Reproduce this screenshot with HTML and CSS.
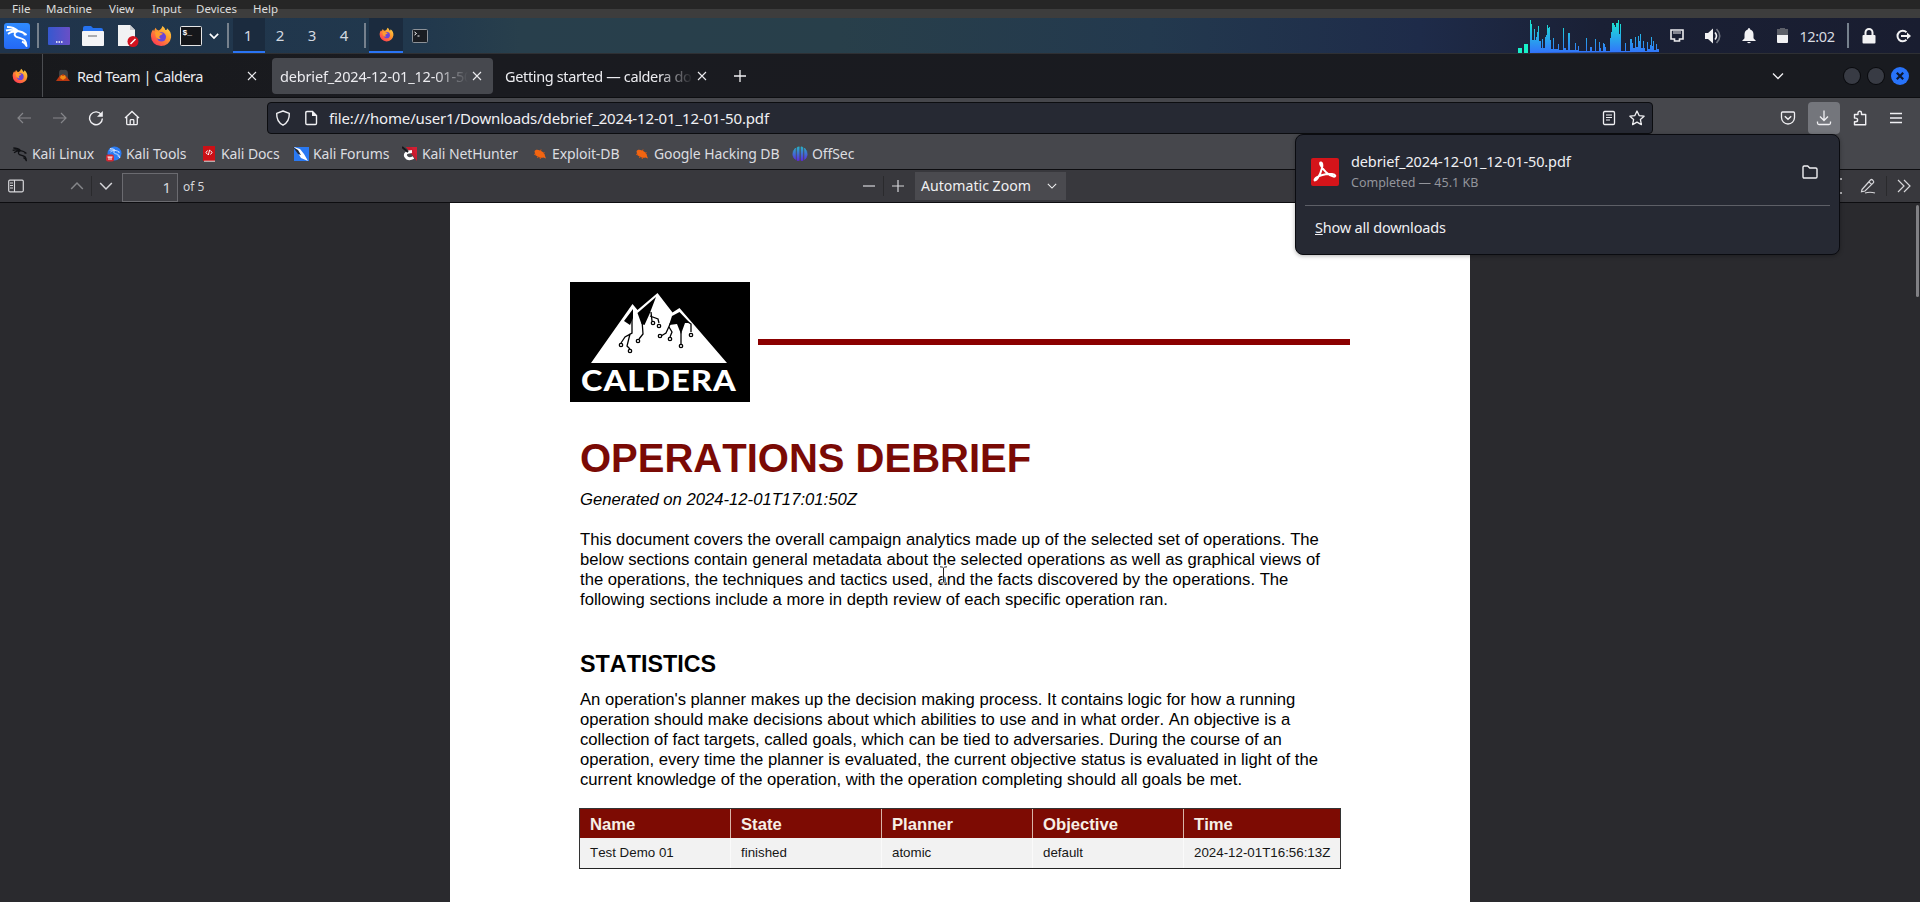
FILE: index.html
```html
<!DOCTYPE html>
<html lang="en">
<head>
<meta charset="utf-8">
<title>debrief_2024-12-01_12-01-50.pdf</title>
<link rel="stylesheet" href="styles.css">
</head>
<body>
<svg width="0" height="0" class="defs">
  <defs>
    <linearGradient id="ffg" x1="1" y1="0" x2="0.2" y2="1"><stop offset="0" stop-color="#ffe14a"/><stop offset=".45" stop-color="#ff9a2e"/><stop offset="1" stop-color="#ff3355"/></linearGradient>
    <linearGradient id="kg" x1="0" y1="0" x2="0" y2="1"><stop offset="0" stop-color="#2f8bff"/><stop offset="1" stop-color="#2468f5"/></linearGradient>
    <linearGradient id="dg" x1="0" y1="0" x2="1" y2="0"><stop offset="0" stop-color="#3558cf"/><stop offset="1" stop-color="#6a4fc6"/></linearGradient>
    <linearGradient id="gg" gradientUnits="userSpaceOnUse" x1="0" y1="0" x2="0" y2="34"><stop offset="0" stop-color="#18f0c8"/><stop offset=".5" stop-color="#26b0e8"/><stop offset="1" stop-color="#3272fb"/></linearGradient>
    <linearGradient id="og" x1="0" y1="0" x2="0" y2="1"><stop offset="0" stop-color="#27b3c8"/><stop offset="1" stop-color="#5a2be0"/></linearGradient>
    <symbol id="firefox" viewBox="0 0 24 24">
      <path d="M13.500 1c2 1.200 3 3 3.200 4.500 1 .3 2-.5 1.800-2 3.500 2.500 5 6 4.500 10A11 11 0 0 1 12 23 11 11 0 0 1 1 12c0-3 1-5.500 2.500-7 .2 1 .6 1.500 1 1.800C5 5 5.500 3.500 6.500 3c0 1.500 1 2.500 3 3 2-1 3.500-2.500 4-5z" fill="url(#ffg)"/>
      <circle cx="12.500" cy="13" r="5" fill="#6a45d8"/>
      <path d="M5.500 8c2-.9 4.500-.6 6 .6l2.500.8c-.4 1.400-2.500 1.500-3.500 2.500-.7 1-.2 2.600 1.300 3-2.800 1-5.300-.5-5.800-3.500z" fill="#ff9d2d"/>
    </symbol>
    <symbol id="dragon" viewBox="0 0 24 24">
      <path d="M2 3c4 0 8 1 11 4M1 6.500C5 5 9 6 13 7M3 10c3-2.500 6-3 10-3 M13 7c3 .5 5.500 1.500 8 3.500l-2.500-.2 M13 7c-3 1-4.500 3-2.500 5.200 2.500 2 6.500 1.500 9 4 1.500 1.600 2 3.500 2 5.800-1-2.500-2.500-3.800-4.500-4.500" fill="none" stroke="currentColor" stroke-width="1.900" stroke-linejoin="round"/>
    </symbol>
    <symbol id="chev" viewBox="0 0 12 12"><path d="M1 3.500l5 5 5-5" fill="none" stroke="currentColor" stroke-width="1.300"/></symbol>
    <symbol id="x" viewBox="0 0 10 10"><path d="M1 1l8 8M9 1L1 9" stroke="currentColor" stroke-width="1.100"/></symbol>
    <symbol id="bug" viewBox="0 0 16 16"><path d="M2.500 5.500C3 3.500 5.500 3.500 8 4.500c3 1 5 3 5 5.500l1 2.500-2.500-1C8 12.500 5 10.500 3.500 9z" fill="#f26511"/><path d="M2 8l2 1M5 11.500l2-1M8 13l1-2M9 3.500L8.500 5M12.500 6.500L11 7.500" stroke="#e3570c"/></symbol>
  </defs>
</svg>

<nav class="menubar"><span>File</span><span>Machine</span><span>View</span><span>Input</span><span>Devices</span><span>Help</span></nav>

<header class="panel">
  <div class="panel-left">
    <div class="cell logo"><svg width="26" height="26" viewBox="0 0 26 26"><rect width="26" height="26" rx="3" fill="url(#kg)"/><use href="#dragon" x="1" y="1" width="24" height="24" color="#fff"/></svg></div>
    <i class="sep"></i>
    <div class="cell"><svg width="22" height="18" viewBox="0 0 22 18"><rect width="22" height="18" rx="1" fill="url(#dg)"/><path d="M8 15h1.500M10.500 15H12M13 15h1.500" stroke="#fff" stroke-width="1.500"/></svg></div>
    <div class="cell"><svg width="22" height="20" viewBox="0 0 22 20"><path d="M1 2q0-2 2-2h6l2 2h8q2 0 2 2v4H1z" fill="#2572f0"/><rect y="5" width="22" height="15" rx="1" fill="#f4f4f6"/><path d="M6 10h9" stroke="#a9abb0" stroke-width="2"/></svg></div>
    <div class="cell"><svg width="22" height="22" viewBox="0 0 22 22"><path d="M1 0h12l5 5v16H1z" fill="#f1f2f3"/><path d="M13 0v5h5z" fill="#c9ccd0"/><circle cx="16" cy="16.500" r="5.500" fill="#d3121f"/><path d="M13.500 19l5-5" stroke="#fff" stroke-width="1.500"/></svg></div>
    <div class="cell"><svg width="22" height="22"><use href="#firefox" width="22" height="22"/></svg></div>
    <div class="cell"><svg width="22" height="20" viewBox="0 0 22 20"><rect x=".5" y=".5" width="21" height="19" rx="1" fill="#15161a" stroke="#e6e6e6"/><text x="2.500" y="9" class="term">$_</text></svg></div>
    <div class="cell launcher-more"><svg width="10" height="10" viewBox="0 0 12 12"><path d="M1 3.500l5 5 5-5" fill="none" stroke="#fff" stroke-width="2"/></svg></div>
    <i class="sep"></i>
    <div class="ws active">1</div><div class="ws">2</div><div class="ws">3</div><div class="ws">4</div>
    <i class="sep"></i>
    <div class="cell task"><svg width="15" height="15"><use href="#firefox" width="15" height="15"/></svg></div>
    <div class="cell"><svg width="16" height="14" viewBox="0 0 16 14"><rect x=".5" y=".5" width="15" height="13" rx="1" fill="#1a1d22" stroke="#8d9298"/><path d="M2.500 3l2 1.500-2 1.500M5.500 7h2" stroke="#fff" fill="none"/></svg></div>
  </div>
  <div class="panel-right">
    <svg class="graph" width="141" height="34" viewBox="0 0 141 34">
      <path fill="#18f0c8" d="M0 29h4v5H0zM6 25h4v9H6z"/>
      <path fill="url(#gg)" d="M12 34V1h1v4h1v16h2V10h1v11h1v-3h1v-5h1V7h1v15h2v7h1V20h1v9h2V18h1v-2h1V6h1v3h1V8h1v13h1v9h2V19h1v11h4v-5h1v6h4V9h1v20h2v2h2V14h2v17h5v-7h1v7h2v-4h1v5h7V19h1v13h3v-12h-1h1v8h2v4h3V20h1v12h3v-9h1v6h1v3h2v-8h1v1h1v3h1v4h4v-13h1v-6h1V4h2V6h1v2h1V4h2V1h1v14h1V5h1v27h4v-8h1v8h4V20h2v4h1v5h2V18h1v10h2V17h1v5h1v-7h1v14h2v-7h1v7h1v3h2v-9h1v7h2v-4h1v-8h1v9h1v-5h1v9h2v-6h1v5h2v-3h1v4h3v-5h3v7z"/>
    </svg>
    <div class="cell"><svg width="14" height="13" viewBox="0 0 14 13"><path d="M1 1h12v9H9.500v2h-5v-2H1z" fill="none" stroke="#ececee" stroke-width="1.600"/><path d="M4 2v3M6 2v3M8 2v3M10 2v3" stroke="#ececee"/></svg></div>
    <div class="cell"><svg width="18" height="18" viewBox="0 0 18 18"><path d="M1 6h3l5-4.500v15L4 12H1z" fill="#f2f2f4"/><path d="M11 5.500q3 3.500 0 7" fill="none" stroke="#f2f2f4" stroke-width="1.600"/><path d="M12.500 2q6.500 7 0 14" fill="none" stroke="#6f7480" stroke-width="1.600"/></svg></div>
    <div class="cell"><svg width="14" height="16" viewBox="0 0 14 16"><path d="M7 0q1.200 0 1.200 1.500Q11.500 2.500 11.500 6.500v3.800L14 13H0l2.500-2.700V6.500q0-4 3.300-5Q5.800 0 7 0zM5 14h4q-2 2.500-4 0z" fill="#f2f2f4"/></svg></div>
    <div class="cell"><svg width="11" height="15" viewBox="0 0 11 15"><path d="M3 0h5v1h3v6H0V1h3z" fill="#5d6069"/><path d="M0 7h11v7q0 1-1 1H1q-1 0-1-1z" fill="#f2f2f4"/></svg></div>
    <div class="clock">12:02</div>
    <i class="sep"></i>
    <div class="cell"><svg width="14" height="16" viewBox="0 0 14 16"><path d="M3.500 8V4.500a3.500 3.500 0 0 1 7 0V8" fill="none" stroke="#f2f2f4" stroke-width="2"/><rect x="0.500" y="7" width="13" height="8.500" rx="1" fill="#f2f2f4"/></svg></div>
    <div class="cell"><svg width="15" height="14" viewBox="0 0 15 14"><path d="M10.500 3.200A5.300 5.300 0 1 0 10.500 10.800M5 7h8" fill="none" stroke="#f2f2f4" stroke-width="2"/><path d="M11 3.500L15 7l-4 3.500z" fill="#f2f2f4"/></svg></div>
  </div>
</header>

<div class="tabs">
  <div class="tab-home"><svg width="16" height="16"><use href="#firefox" width="16" height="16"/></svg></div>
  <div class="tab t1">
    <svg class="fav" width="14" height="14" viewBox="0 0 14 14"><path d="M3 4q0-4 4-3 5-1 5 4v5H3z" fill="#3f4244"/><path d="M0 12l3.500-5 3.500-2 3 2 4 5z" fill="#b93812"/><path d="M5 6l2 1 2-1 1 3-3 2-3-2z" fill="#f18a14"/></svg>
    <span>Red Team | Caldera</span><svg class="close" width="10" height="10"><use href="#x" width="10" height="10"/></svg>
  </div>
  <div class="tab t2 active"><span class="fade">debrief_2024-12-01_12-01-50.pdf</span><svg class="close" width="10" height="10"><use href="#x" width="10" height="10"/></svg></div>
  <div class="tab t3"><span class="fade">Getting started — caldera do</span><svg class="close" width="10" height="10"><use href="#x" width="10" height="10"/></svg></div>
  <svg class="plus" width="14" height="14" viewBox="0 0 14 14"><path d="M7 1v12M1 7h12" stroke="#f0f0f2" stroke-width="1.300"/></svg>
  <div class="wm">
    <svg width="12" height="12" class="tabs-menu"><use href="#chev" width="12" height="12"/></svg>
    <i></i><i></i><svg class="wm-close" width="18" height="18" viewBox="0 0 18 18"><circle cx="9" cy="9" r="9" fill="#2873fa"/><path d="M5.800 5.800l6.400 6.400M12.200 5.800l-6.400 6.400" stroke="#0d1830" stroke-width="2.200"/></svg>
  </div>
</div>

<div class="nav">
  <div class="nav-buttons">
    <svg class="dim" width="16" height="16" viewBox="0 0 16 16"><path d="M15 8H2M7 3L2 8l5 5" fill="none" stroke="currentColor" stroke-width="1.200"/></svg>
    <svg class="dim" width="16" height="16" viewBox="0 0 16 16"><path d="M1 8h13M9 3l5 5-5 5" fill="none" stroke="currentColor" stroke-width="1.200"/></svg>
    <svg width="16" height="16" viewBox="0 0 16 16"><path d="M13.500 5A6.400 6.400 0 1 0 14.400 8.500" fill="none" stroke="currentColor" stroke-width="1.400"/><path d="M14.800 1v5.800H9z" fill="currentColor"/></svg>
    <svg width="16" height="16" viewBox="0 0 16 16"><path d="M1 8l7-6.500L15 8M2.700 7v6.500q0 1.200 1.200 1.200h8.200q1.200 0 1.200-1.200V7M6.200 14.500v-4q0-.8.800-.8h2q.8 0 .8.800v4" fill="none" stroke="currentColor" stroke-width="1.300"/></svg>
  </div>
  <div class="urlbar">
    <svg width="16" height="16" viewBox="0 0 16 16"><path d="M8 1l6.300 2.300c.2 5-1.500 9.500-6.300 11.900C3.200 12.800 1.500 8.300 1.700 3.300z" fill="none" stroke="currentColor" stroke-width="1.400" stroke-linejoin="round"/></svg>
    <svg width="14" height="16" viewBox="0 0 14 16"><path d="M3 1.500h5.500l4 4v7.800q0 1.200-1.200 1.200H3q-1.200 0-1.200-1.200V2.700Q1.800 1.500 3 1.500z" fill="none" stroke="currentColor" stroke-width="1.400"/><path d="M8 1l5 5H8z" fill="currentColor"/></svg>
    <span>file:///home/user1/Downloads/debrief_2024-12-01_12-01-50.pdf</span>
    <svg class="reader" width="14" height="16" viewBox="0 0 14 16"><rect x="1.500" y="1.500" width="11" height="13" rx="1.200" fill="none" stroke="currentColor" stroke-width="1.300"/><path d="M4 5h6M4 7.500h6M4 10h4" stroke="currentColor" stroke-width="1.200"/></svg>
    <svg width="16" height="16" viewBox="0 0 16 16"><path d="M8 1l2.100 4.600 5 .6-3.700 3.400 1 5L8 12.100l-4.400 2.500 1-5L.9 6.200l5-.6z" fill="none" stroke="currentColor" stroke-width="1.300" stroke-linejoin="round"/></svg>
  </div>
  <div class="nav-tools">
    <div class="tool"><svg width="16" height="16" viewBox="0 0 16 16"><path d="M2.500 2h11q1 0 1 1v4.500a6.500 6.500 0 0 1-13 0V3q0-1 1-1z" fill="none" stroke="currentColor" stroke-width="1.300"/><path d="M4.800 6.300L8 9.300l3.200-3" fill="none" stroke="currentColor" stroke-width="1.500"/></svg></div>
    <div class="tool on"><svg width="16" height="16" viewBox="0 0 16 16"><path d="M8 .5V10M4 6.500l4 4 4-4M1.500 11.500v1.500q0 1.500 1.500 1.500h10q1.500 0 1.500-1.500v-1.500" fill="none" stroke="currentColor" stroke-width="1.300"/></svg></div>
    <div class="tool ext"><svg width="16" height="16" viewBox="0 0 16 16"><path d="M2.500 8V4.500H6V3a1.700 1.700 0 0 1 3.500 0v1.500h4.200v10.200H2.500v-3h1.300a1.700 1.700 0 0 0 0-3.600z" fill="none" stroke="currentColor" stroke-width="1.400" stroke-linejoin="round"/></svg></div>
    <div class="tool"><svg width="14" height="14" viewBox="0 0 14 14"><path d="M1 2.500h12M1 7h12M1 11.500h12" stroke="currentColor" stroke-width="1.300"/></svg></div>
  </div>
</div>

<div class="bookmarks">
  <a class="b1"><svg width="16" height="16" color="#101114"><use href="#dragon" width="16" height="16"/></svg>Kali Linux</a>
  <a class="b2"><svg width="16" height="16" viewBox="0 0 16 16"><circle cx="8.500" cy="7.500" r="7" fill="#2b7bf2"/><g color="#cfe2ff"><use href="#dragon" x="3" y="1" width="12" height="12"/></g><rect y="8.500" width="8" height="7" rx="2" fill="#d22a33"/><path d="M1.500 11h5M3 11v3M5 11v3" stroke="#fff"/></svg>Kali Tools</a>
  <a class="b3"><svg width="16" height="16" viewBox="0 0 16 16"><path d="M2 0h12v15H2z" fill="#cc1016"/><path d="M3 15.200h11" stroke="#f0dada"/><path d="M6.500 4.500L5 6.500l1.500 2M9.500 4.500L11 6.500l-1.500 2M8.600 3.800L7.400 9" stroke="#fff" fill="none"/></svg>Kali Docs</a>
  <a class="b4"><svg width="16" height="16" viewBox="0 0 16 16"><path d="M1 1h15v14H1z" fill="#2a79f2"/><path d="M1 1l6 2 4 5 4 7-7-3-3-5z" fill="#fff"/><path d="M0 1l5 3 3 5-3-1z" fill="#222b3b"/></svg>Kali Forums</a>
  <a class="b5"><svg width="16" height="16" viewBox="0 0 16 16"><path d="M4 1h11v11z" fill="#d21f33"/><path d="M4 1h5l6 9v5z" fill="#c91b2e"/><path d="M10 5.500Q2.500 6 3.500 10q2.500 4.500 8 1.500" fill="none" stroke="#fff" stroke-width="3"/><path d="M0 1l6 5" stroke="#15161a" stroke-width="2"/></svg>Kali NetHunter</a>
  <a class="b6"><svg width="16" height="16"><use href="#bug" width="16" height="16"/></svg>Exploit-DB</a>
  <a class="b7"><svg width="16" height="16"><use href="#bug" width="16" height="16"/></svg>Google Hacking DB</a>
  <a class="b8"><svg width="16" height="16" viewBox="0 0 16 16"><path d="M3.500 2Q.5 5 .8 9q1 4 3 4.500zM5 1.500L7.200 .8V14.500H5zM9 .8l2 .7V14.500H9zM12.500 2q3 3 2.700 7-1 4-2.700 4.500z" fill="url(#og)" stroke="url(#og)" stroke-width=".6"/></svg>OffSec</a>
</div>

<div class="pdfbar">
  <div class="pdf-left">
    <svg width="16" height="14" viewBox="0 0 16 14"><rect x=".7" y="1.200" width="14.600" height="11.600" rx="1.200" fill="none" stroke="currentColor" stroke-width="1.200"/><path d="M6.500 1v12M2 4h3M2 6.500h3M2 9h3" stroke="currentColor" stroke-width="1.100"/></svg>
    <svg class="up dim" width="14" height="14"><use href="#chev" width="14" height="14"/></svg>
    <i class="vsep"></i>
    <svg class="down" width="14" height="14"><use href="#chev" width="14" height="14"/></svg>
    <div class="pageno">1</div><span class="of">of 5</span>
  </div>
  <div class="pdf-mid">
    <svg width="12" height="12" viewBox="0 0 12 12"><path d="M0 6h12" stroke="currentColor" stroke-width="1.200"/></svg>
    <i class="vsep"></i>
    <svg width="12" height="12" viewBox="0 0 12 12"><path d="M0 6h12M6 0v12" stroke="currentColor" stroke-width="1.200"/></svg>
    <div class="select"><span>Automatic Zoom</span><svg width="10" height="10"><use href="#chev" width="10" height="10"/></svg></div>
  </div>
  <div class="pdf-right">
    <svg width="16" height="16" viewBox="0 0 16 16"><path d="M15 1h-3.500v14H15" fill="none" stroke="currentColor" stroke-width="1.300"/></svg>
    <svg width="16" height="16" viewBox="0 0 16 16"><path d="M2 11.500L10.500 2q1-1 2 0l.8.800q1 1 0 2L5 13l-3.500.8zM9 3.800l2.800 2.800M5 15q5-1.500 10 0" fill="none" stroke="currentColor" stroke-width="1.200"/></svg>
    <i class="vsep"></i>
    <svg width="14" height="14" viewBox="0 0 14 14"><path d="M1 1l6 6-6 6M7 1l6 6-6 6" fill="none" stroke="currentColor" stroke-width="1.200"/></svg>
  </div>
</div>

<main class="viewer">
  <article class="page">
    <div class="brand">
      <svg width="180" height="120" viewBox="0 0 180 120">
        <rect width="180" height="120" fill="#000"/>
        <path d="M21 81L62.500 22l5 6L87.500 11l15 19.500L109.500 26 157 81z" fill="#fff"/>
        <path d="M63 27l-9 12 6 4 3-7zM86 15L67.500 31l4 11 3 1 5-11zM109.500 30L102 34l-3 9 8-1 4 10 4-11 5 0z" fill="#000"/>
        <g fill="none" stroke="#000" stroke-width="1.300">
          <path d="M62 36v15l-7 4-4 6M60 52l-3 12 3 3M72 38l1 14-4 5M81 30l1 9M80 34l8 3 1 4M101 40l-5 11-5 3M99 45l3 5-2 5M111 50v12M113 37l8 5v8"/>
          <g fill="#fff"><circle cx="51" cy="63" r="1.700"/><circle cx="60" cy="69" r="1.700"/><circle cx="68" cy="59" r="1.700"/><circle cx="83" cy="41" r="1.700"/><circle cx="89" cy="44" r="1.700"/><circle cx="90" cy="54" r="1.700"/><circle cx="100" cy="57" r="1.700"/><circle cx="111" cy="64" r="1.700"/><circle cx="121" cy="53" r="1.700"/></g>
        </g>
        <text class="logotype" x="11" y="109" textLength="156" lengthAdjust="spacingAndGlyphs">CALDERA</text>
      </svg>
      <div class="rule"></div>
    </div>
    <h1>OPERATIONS DEBRIEF</h1>
    <p class="gen">Generated on 2024-12-01T17:01:50Z</p>
    <p class="intro">This document covers the overall campaign analytics made up of the selected set of operations. The<br>below sections contain general metadata about the selected operations as well as graphical views of<br>the operations, the techniques and tactics used, and the facts discovered by the operations. The<br>following sections include a more in depth review of each specific operation ran.</p>
    <h2>STATISTICS</h2>
    <p>An operation's planner makes up the decision making process. It contains logic for how a running<br>operation should make decisions about which abilities to use and in what order. An objective is a<br>collection of fact targets, called goals, which can be tied to adversaries. During the course of an<br>operation, every time the planner is evaluated, the current objective status is evaluated in light of the<br>current knowledge of the operation, with the operation completing should all goals be met.</p>
    <div class="table">
      <div class="row head"><span>Name</span><span>State</span><span>Planner</span><span>Objective</span><span>Time</span></div>
      <div class="row"><span>Test Demo 01</span><span>finished</span><span>atomic</span><span>default</span><span>2024-12-01T16:56:13Z</span></div>
    </div>
  </article>
  <div class="scrollbar"></div>
</main>

<svg class="cursor" width="9" height="18" viewBox="0 0 9 18"><path d="M1 .8q3 0 3.500 1.200Q5 .8 8 .8M4.500 2v14M1 17.200q3 0 3.500-1.200.5 1.200 3.500 1.200" fill="none" stroke="#fff" stroke-width="2"/><path d="M1 .8q3 0 3.500 1.200Q5 .8 8 .8M4.500 2v14M1 17.200q3 0 3.500-1.200.5 1.200 3.500 1.200" fill="none" stroke="#222"/></svg>

<aside class="popup">
  <div class="dl">
    <svg width="28" height="28" viewBox="0 0 28 28"><rect width="28" height="28" rx="2" fill="#d4141a"/><path d="M10 4.500c2.800 1 .8 9-3.200 15.500-2 3-4 3-3 1.200 2-3.200 10-5.700 17.200-5.200 4 .4 4.200 3 1.500 2.600C17 17.500 11.500 11 9.600 7c-.7-1.500-.6-2.800.4-2.500z" fill="none" stroke="#fff" stroke-width="2"/></svg>
    <div class="dl-text"><b>debrief_2024-12-01_12-01-50.pdf</b><small>Completed — 45.1 KB</small></div>
    <svg width="16" height="16" viewBox="0 0 16 16"><path d="M1 3.200Q1 2 2.200 2h3.500l2 2h6Q15 4 15 5.200v7.600q0 1.200-1.200 1.200H2.200Q1 14 1 12.800z" fill="none" stroke="currentColor" stroke-width="1.400"/></svg>
  </div>
  <div class="all"><u>S</u>how all downloads</div>
</aside>
</body>
</html>
```
FILE: styles.css
```css
* { box-sizing: border-box; }
html, body { margin: 0; height: 100%; overflow: hidden; }
body {
  display: flex; flex-direction: column;
  width: 1920px; height: 902px;
  background: #2a2a2e; color: #f0f0f3;
  font: 14.500px "Noto Sans", sans-serif;
}
svg { flex: none; display: block; }
.defs { position: absolute; }

.menubar {
  height: 18px; flex: none; overflow: hidden;
  display: grid; grid-template-columns: 34px 63px 43px 44px 57px 60px;
  padding-left: 12px;
  background: linear-gradient(#262626 0 9px, #3d3d3d 9px);
  font-size: 11.500px; line-height: 17px; color: #dcdcdc;
}

.panel {
  height: 36px; flex: none; display: flex; justify-content: space-between;
  background: linear-gradient(90deg, #20344b 0, #21384d 420px, #283f4c 520px, #283f4a 840px, #23394e 1150px, #1e2b49 1420px, #1a2035 1600px, #191d30 100%);
  border-bottom: 1px solid #2e3034;
}
.panel-left, .panel-right { display: grid; align-items: center; justify-items: center; }
.panel-left { grid-template-columns: 35px 6px 36px 32px 38px 28px 32px 16px 10px 32px 32px 32px 32px 8px 34px 33px; }
.panel-right { grid-template-columns: 141px 36px 36px 35px 33px 43px 11px 31px 39px; margin-right: -3px; }
.logo { margin-left: -2px; }
.launcher-more { margin-left: -2px; }
.sep { width: 2px; height: 25px; background: #76818d; }
.term { font: bold 8px "Liberation Mono", monospace; fill: #fff; }
.ws { width: 32px; height: 35px; text-align: center; line-height: 34px; font-size: 15px; color: #d3d9e0; padding-right: 2px; }
.ws.active, .task { background: #1b2b3e; border-bottom: 2px solid #2a74f5; }
.task { width: 34px; height: 35px; display: grid; place-items: center; }
.graph { align-self: end; }
.clock { font-size: 14.500px; letter-spacing: -.4px; color: #d8dbe0; line-height: 34px; margin-left: -7px; }

.tabs {
  height: 44px; flex: none; display: flex; align-items: center;
  background: linear-gradient(90deg, #18191c, #1a1b20 400px, #191b20);
  border-bottom: 1px solid #0d0e11;
}
.tab-home { width: 43px; height: 43px; border-right: 1px solid #4b4d51; display: flex; align-items: center; padding-left: 12px; }
.tab { height: 36px; display: flex; align-items: center; border-radius: 4px; color: #ececf0; }
.tab span { white-space: nowrap; overflow: hidden; flex: 1; letter-spacing: -.16px; }
.fade { mask-image: linear-gradient(90deg, #000 calc(100% - 34px), transparent); }
.t1 { width: 229px; padding: 0 15px 0 13px; }
.tab.t1 span { letter-spacing: -.46px; }
.fav { margin-right: 7px; }
.t2 { width: 221px; padding: 0 11px 0 8px; }
.t2.active { background: #46484e; }
.t3 { width: 226px; padding: 0 12px 0 12px; }
.tab.t3 span { letter-spacing: -.36px; }
.t2 .fade, .t3 .fade { margin-right: 4px; }
.plus { margin-left: 14px; }
.wm { margin-left: auto; display: flex; align-items: center; gap: 8px; padding-right: 11px; }
.wm i { width: 16px; height: 16px; border-radius: 50%; background: #383b44; box-shadow: 0 0 0 1px #0a0b0e; }
.wm-close { margin-left: -1px; }
.tabs-menu { margin-right: 52px; }

.nav { height: 41px; flex: none; display: flex; align-items: center; padding-bottom: 1px; background: #46474c; }
.nav-buttons { width: 267px; display: flex; gap: 20px; padding-left: 16px; }
.dim { color: #85868a; }
.urlbar {
  width: 1386px; height: 32px; display: flex; align-items: center;
  padding: 0 7px; border: 1px solid #0c0d10; border-radius: 4px; background: #262933;
}
.urlbar span { flex: 1; margin-left: 11px; font-size: 15px; letter-spacing: -.15px; white-space: nowrap; line-height: 20px; padding-bottom: 1px; }
.urlbar svg:nth-child(2) { margin-left: 13px; }
.reader { margin-right: 13px; }
.nav-tools { margin-left: 119px; display: flex; gap: 4px; }
.tool { width: 32px; height: 32px; border-radius: 4px; display: grid; place-items: center; }
.tool.on { background: #74767c; }

.bookmarks {
  height: 31px; flex: none; display: grid;
  grid-template-columns: 94px 96px 91px 109px 130px 102px 158px 80px;
  padding: 0 0 1px 12px; align-items: center; background: #46474c;
  border-bottom: 1px solid #0d0d10; white-space: nowrap; font-size: 14px; color: #dcdde0;
  letter-spacing: -.1px;
}
.bookmarks a { display: flex; align-items: center; gap: 4px; }
.b3 { margin-left: -1px; }

.pdfbar {
  height: 33px; flex: none; display: grid; grid-template-columns: 863px 1fr auto;
  align-items: center; background: #38383d; border-bottom: 1px solid #0d0d10; color: #d6d6da;
}
.pdf-left, .pdf-mid, .pdf-right { display: flex; align-items: center; height: 32px; }
.pdf-left { padding-left: 8px; }
.up { margin-left: 46px; transform: rotate(180deg); }
.vsep { width: 1px; height: 20px; background: #2a2a2d; }
.pdf-left .vsep { margin: 0 7px 0 7px; }
.pageno { margin-left: 9px; align-self: end; width: 56px; height: 29px; border: 1px solid #6b6b70; background: #404045; text-align: right; line-height: 26px; padding-right: 6px; font-size: 15px; }
.of { margin-left: 5px; font-size: 12px; }
.pdf-mid .vsep { margin: 0 8px; }
.select { margin-left: 11px; width: 151px; height: 28px; background: #4a4a4f; display: flex; align-items: center; justify-content: space-between; padding: 0 9px 0 6px; font-size: 14.100px; color: #f0f0f2; }
.select span { line-height: 20px; padding-bottom: 1px; }
.pdf-right { padding-right: 9px; }
.pdf-right svg:nth-child(2) { margin: 0 10px 0 28px; }
.pdf-right svg:nth-child(1) { margin-right: -11px; }
.pdf-right svg:nth-child(4) { margin-left: 10px; }

.viewer { flex: 1; display: flex; min-height: 0; }
.page {
  margin-left: 450px; width: 1020px; padding: 79px 120px 0 130px;
  background: #fff; color: #000; overflow: hidden;
  font: 16.667px/20px "Liberation Sans", Arial, sans-serif;
  font-kerning: none;
}
.brand { display: flex; align-items: center; margin-left: -10px; gap: 8px; }
.brand svg { flex: none; }
.rule { width: 592px; height: 6px; background: #8b0000; }
.logotype { font: 900 28px Lato, sans-serif; letter-spacing: 1px; fill: #fff; }
.page h1 { margin: 32px 0 0; font-size: 40px; line-height: 48px; color: #7a0a05; white-space: nowrap; }
.page p { margin: 0; white-space: nowrap; }
.page .gen { margin-top: 8px; font-style: italic; }
.page .intro { margin-top: 20px; }
.page h2 { margin: 40px 0 0; font-size: 23.333px; line-height: 28px; }
.page h2 + p { margin-top: 12px; }
.table { width: 762px; margin-top: 18px; margin-left: -1px; border: 1px solid #333; border-bottom-color: #222; }
.row { display: grid; grid-template-columns: 151px 151px 151px 151px 1fr; height: 30px; background: #f2f2f2; font-size: 13.333px; line-height: 29px; color: #161616; }
.row span { padding-left: 10px; border-right: 1px solid #fafafa; white-space: nowrap; }
.row span:last-child { border-right: 0; }
.row.head { height: 29px; background: #7d0b03; color: #f7efe6; font-size: 16.667px; line-height: 31px; font-weight: bold; }
.row.head span { border-right-color: #d9b5a8; }
.scrollbar { margin: 2px 1px 0 auto; width: 3px; height: 92px; border-radius: 2px; background: #808084; }

.cursor { position: absolute; left: 939px; top: 566px; }

.popup {
  position: absolute; left: 1295px; top: 134px; width: 545px; height: 121px;
  border: 1px solid #0a0b10; border-radius: 8px; background: #262933; padding: 0 9px;
  box-shadow: 0 1px 4px rgba(0,0,0,.3);
}
.dl { height: 71px; display: flex; align-items: center; padding: 3px 12px 0 6px; border-bottom: 1px solid #5d5f67; }
.dl-text { flex: 1; margin-left: 12px; display: flex; flex-direction: column; padding-top: 1px; }
.dl-text b { font-weight: normal; line-height: 21px; letter-spacing: -.12px; }
.dl-text small { font-size: 12.500px; line-height: 22px; color: #93959c; }
.all { padding-left: 10px; line-height: 42px; font-size: 14.500px; letter-spacing: -.2px; }
```
